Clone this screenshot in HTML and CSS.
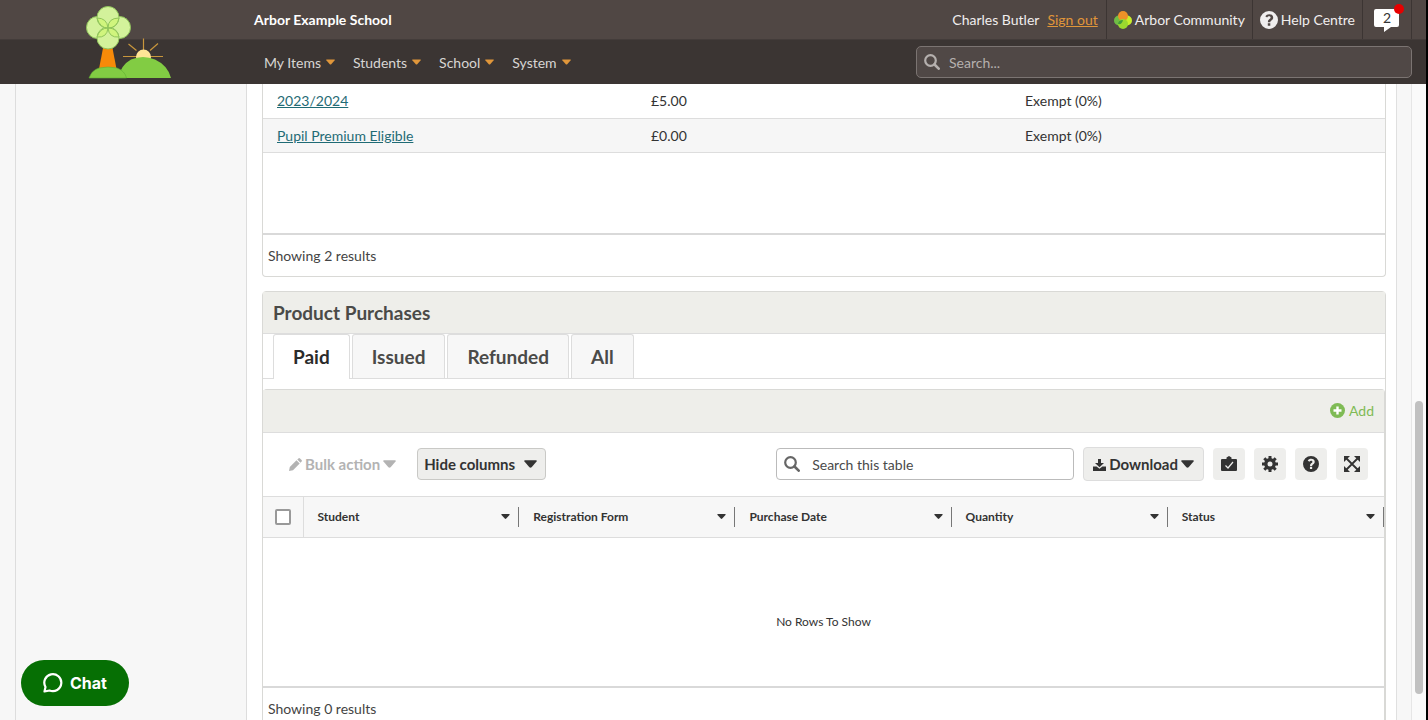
FILE: index.html
```html
<!DOCTYPE html>
<html lang="en">
<head>
    <meta charset="UTF-8">
    <meta name="viewport" content="width=device-width, initial-scale=1.0">
    <title>Arbor - Product Purchases</title>
    <link rel="stylesheet" href="styles.css">
</head>
<body>
    <!-- Shared icons -->
    <svg class="sprite" aria-hidden="true">
        <symbol id="caret" viewBox="0 0 12 7">
            <path d="M1 0h10q1.400 .2 .6 1.300L7 6.400q-1 .9-2 0L.4 1.300Q-.4.200 1 0z"/>
        </symbol>
        <symbol id="search" viewBox="0 0 16 16">
            <circle cx="6.500" cy="6.500" r="5.300" fill="none" stroke="currentColor" stroke-width="2.200"/>
            <path d="M10.500 10.500l4.200 4.200" stroke="currentColor" stroke-width="2.600" stroke-linecap="round"/>
        </symbol>
        <symbol id="help" viewBox="0 0 18 18">
            <path fill-rule="evenodd" d="M9 0a9 9 0 1 0 0 18A9 9 0 0 0 9 0zM7.800 12.200h2.500v2.500H7.800zM7.900 11.200c0-3.200 2.700-2.900 2.700-4.600 0-.9-.7-1.300-1.500-1.300-.9 0-1.500.5-2 1.200L5.300 5.200C6.200 3.900 7.500 3.200 9.200 3.200c2.300 0 4 1.300 4 3.300 0 2.900-2.900 2.900-2.900 4.700z"/>
        </symbol>
    </svg>

    <header class="header">
        <a class="logo" href="#" aria-label="Home">
            <svg viewBox="84 4 90 76" width="90" height="76">
                <g stroke="#c8963c" stroke-width="1.200">
                    <path d="M143.500 38.500v12M123 56.500h40M128.500 44l8 6.500M158 43.500l-8 7"/>
                </g>
                <circle cx="143.500" cy="57" r="7.500" fill="#ffe596"/>
                <path d="M103 48h9.500l4 21h-17.500z" fill="#f78a09"/>
                <path d="M118 78q3-13 13-18.500 12-5 24 0 13 6 16 18.500z" fill="#82cc43"/>
                <path d="M89 78q3-8 10-10 9-2 18 0 8 3 9.500 10z" fill="#82cc43" stroke="#5faf33" stroke-width=".6"/>
                <g fill="#d3f29b" stroke="#8fc45a" stroke-width="1">
                    <circle cx="97.500" cy="27.500" r="11"/>
                    <circle cx="119.500" cy="27.500" r="11"/>
                    <circle cx="108" cy="17.500" r="11"/>
                    <circle cx="108" cy="38" r="11"/>
                </g>
                <path d="M108 28q-8 0-11-10 10 0 11 10zM108 28q0-10 11-10-2 10-11 10zM108 28q-1 10-11 9 3-9 11-9zM108 28q9 0 11 9-10 1-11-9z" fill="#d0f57d" stroke="#8fc45a" stroke-width="1"/>
            </svg>
        </a>
        <div class="top-bar">
            <strong class="school">Arbor Example School</strong>
            <div class="account">
                <span>Charles Butler</span>
                <a href="#">Sign out</a>
            </div>
            <a class="top-link" href="#">
                <svg width="18" height="18" viewBox="0 0 18 18">
                    <circle cx="5" cy="9.500" r="5" fill="#6fbd45"/>
                    <circle cx="13" cy="9.500" r="5" fill="#c8ee2b"/>
                    <circle cx="9" cy="5" r="5" fill="#ee9128"/>
                    <circle cx="9" cy="13" r="5" fill="#9bd92f"/>
                    <path d="M9 9q-1 5-5 4 0-4 5-4z" fill="#429c3c"/>
                </svg>
                Arbor Community
            </a>
            <a class="top-link" href="#">
                <svg width="18" height="18"><use href="#help"/></svg>
                Help Centre
            </a>
            <a class="messages" href="#" aria-label="2 messages">
                <svg width="26" height="24" viewBox="0 0 26 24">
                    <path d="M2 1h21q2 0 2 2v14q0 2-2 2h-6l-7 5v-5H2q-2 0-2-2V3q0-2 2-2z" fill="#fff"/>
                </svg>
                <span class="count">2</span>
                <span class="dot"></span>
            </a>
        </div>
        <div class="nav-bar">
            <nav class="nav">
                <a href="#">My Items <svg width="9" height="6"><use href="#caret"/></svg></a>
                <a href="#">Students <svg width="9" height="6"><use href="#caret"/></svg></a>
                <a href="#">School <svg width="9" height="6"><use href="#caret"/></svg></a>
                <a href="#">System <svg width="9" height="6"><use href="#caret"/></svg></a>
            </nav>
            <label class="site-search">
                <svg width="16" height="16"><use href="#search"/></svg>
                <input type="text" placeholder="Search..." aria-label="Search">
            </label>
        </div>
    </header>

    <div class="page">
        <aside class="sidebar"></aside>

        <main class="content">
            <section class="panel">
                <table class="prices">
                    <tbody>
                        <tr>
                            <td><a href="#">2023/2024</a></td>
                            <td>£5.00</td>
                            <td>Exempt (0%)</td>
                        </tr>
                        <tr>
                            <td><a href="#">Pupil Premium Eligible</a></td>
                            <td>£0.00</td>
                            <td>Exempt (0%)</td>
                        </tr>
                    </tbody>
                </table>
                <div class="prices-space"></div>
                <p class="results">Showing 2 results</p>
            </section>

            <section class="panel purchases">
                <h2>Product Purchases</h2>
                <div class="tabs" role="tablist">
                    <button class="tab active" role="tab" aria-selected="true">Paid</button>
                    <button class="tab" role="tab">Issued</button>
                    <button class="tab" role="tab">Refunded</button>
                    <button class="tab" role="tab">All</button>
                </div>

                <div class="grid-panel">
                    <div class="grid-head">
                        <a class="add" href="#">
                            <svg width="15" height="15" viewBox="0 0 15 15">
                                <circle cx="7.500" cy="7.500" r="7.500" fill="currentColor"/>
                                <path d="M7.500 3.500v8M3.500 7.500h8" stroke="#fff" stroke-width="2.400"/>
                            </svg>
                            Add
                        </a>
                    </div>

                    <div class="toolbar">
                        <button class="btn bulk" disabled>
                            <svg width="13" height="13" viewBox="0 0 13 13" fill="currentColor">
                                <path d="M0 13l.8-4L7.500 2.300l3.200 3.200L4 12.200zM8.300 1.500L9.400.400q.8-.7 1.600 0L12.600 2q.7.800 0 1.600l-1.100 1.100z"/>
                            </svg>
                            Bulk action
                            <svg width="13" height="8"><use href="#caret"/></svg>
                        </button>
                        <button class="btn columns">
                            Hide columns
                            <svg width="13" height="8"><use href="#caret"/></svg>
                        </button>
                        <label class="table-search">
                            <svg width="16" height="16"><use href="#search"/></svg>
                            <input type="text" placeholder="Search this table" aria-label="Search this table">
                        </label>
                        <button class="btn download">
                            <svg width="13" height="13" viewBox="0 0 13 13" fill="currentColor">
                                <path d="M5 1h3v4h3L6.500 9.300 2 5h3z"/>
                                <path d="M0 8.500h3.600l2.900 2.300 2.900-2.300H13V13H0z"/>
                            </svg>
                            Download
                            <svg width="13" height="8"><use href="#caret"/></svg>
                        </button>
                        <button class="icon-btn" aria-label="Tasks">
                            <svg width="18" height="18" viewBox="0 0 18 18">
                                <path d="M2 4h4.500V2.500L9 1l2.500 1.500V4H16q1 0 1 1v10q0 1-1 1H2q-1 0-1-1V5q0-1 1-1z"/>
                                <path d="M5.500 10.500l2.500 2.500 5-6" fill="none" stroke="#eeeeec" stroke-width="1.200"/>
                            </svg>
                        </button>
                        <button class="icon-btn" aria-label="Settings">
                            <svg width="16" height="16" viewBox="0 0 16 16">
                                <circle cx="8" cy="8" r="4.200" fill="none" stroke="currentColor" stroke-width="3.400"/>
                                <path d="M8 0v3M8 13v3M0 8h3M13 8h3M2.300 2.300l2.200 2.200M11.500 11.500l2.200 2.200M2.300 13.700l2.200-2.200M11.500 4.500l2.200-2.200" stroke="currentColor" stroke-width="3"/>
                            </svg>
                        </button>
                        <button class="icon-btn" aria-label="Help">
                            <svg width="16" height="16"><use href="#help"/></svg>
                        </button>
                        <button class="icon-btn" aria-label="Full screen">
                            <svg width="16" height="16" viewBox="0 0 16 16">
                                <path d="M2 2l12 12M14 2L2 14" stroke="currentColor" stroke-width="1.800"/>
                                <path d="M0 0h6L4 2l-2 2-2 2zM16 0v6l-2-2-2-2-2-2zM0 16v-6l2 2 2 2 2 2zM16 16h-6l2-2 2-2 2-2z"/>
                            </svg>
                        </button>
                    </div>

                    <table class="grid">
                        <thead>
                            <tr>
                                <th class="check"><input type="checkbox" aria-label="Select all"></th>
                                <th><div>Student <svg width="9" height="5"><use href="#caret"/></svg></div></th>
                                <th><div>Registration Form <svg width="9" height="5"><use href="#caret"/></svg></div></th>
                                <th><div>Purchase Date <svg width="9" height="5"><use href="#caret"/></svg></div></th>
                                <th><div>Quantity <svg width="9" height="5"><use href="#caret"/></svg></div></th>
                                <th><div>Status <svg width="9" height="5"><use href="#caret"/></svg></div></th>
                            </tr>
                        </thead>
                        <tbody>
                            <tr>
                                <td class="empty" colspan="6">No Rows To Show</td>
                            </tr>
                        </tbody>
                    </table>
                    <p class="results">Showing 0 results</p>
                </div>
            </section>
        </main>

        <div class="gutter"></div>
    </div>

    <div class="scrollbar"><div class="thumb"></div></div>

    <button class="chat">
        <svg width="20" height="20" viewBox="0 0 20 20">
            <path d="M1.500 18.500l1-4.500A8.500 8.500 0 1 1 6.500 17.500z" fill="none" stroke="#fff" stroke-width="2.200" stroke-linejoin="round"/>
        </svg>
        Chat
    </button>
</body>
</html>
```

FILE: styles.css
```css
* {
    margin: 0;
    padding: 0;
    box-sizing: border-box;
}

body {
    height: 100vh;
    overflow: hidden;
    display: flex;
    flex-direction: column;
    font-family: Lato, "Open Sans", sans-serif;
    font-size: 14px;
    color: #333;
    background: #f7f7f7;
    border-right: 2px solid #000;
}

button,
input {
    font: inherit;
    color: inherit;
}

button {
    cursor: pointer;
}

svg {
    flex-shrink: 0;
    fill: currentColor;
}

.sprite {
    position: absolute;
    width: 0;
    height: 0;
}

/* Header */
.header {
    position: relative;
    z-index: 1;
    flex-shrink: 0;
    color: #f0eeee;
}

.header a {
    color: inherit;
    text-decoration: none;
}

.logo {
    position: absolute;
    left: 84px;
    top: 4px;
}

.top-bar {
    height: 40px;
    padding: 0 14px 0 254px;
    display: flex;
    align-items: center;
    background: #504744;
    border-bottom: 1px solid #433c3a;
}

.school {
    margin-right: auto;
    color: #fff;
}

.account {
    display: flex;
    gap: 8px;
    padding-right: 8px;
}

.header .account a {
    color: #e0963a;
    text-decoration: underline;
}

.top-link,
.messages {
    height: 100%;
    display: flex;
    align-items: center;
    gap: 3px;
    padding: 0 7px;
    border-left: 1px solid #3c3533;
}

.messages {
    position: relative;
    padding: 0 11px;
    border-right: 1px solid #3c3533;
}

.count {
    position: absolute;
    left: 11px;
    top: 9px;
    width: 26px;
    text-align: center;
    font-size: 14px;
    color: #333;
}

.dot {
    position: absolute;
    right: 7px;
    top: 4px;
    width: 10px;
    height: 10px;
    border-radius: 50%;
    background: #e60000;
}

.nav-bar {
    height: 44px;
    padding: 0 14px 0 264px;
    display: flex;
    align-items: center;
    justify-content: space-between;
    background: #3b3533;
}

.nav {
    display: flex;
    gap: 18px;
    color: #d8d5d3;
}

.nav a {
    display: flex;
    align-items: center;
    gap: 5px;
}

.nav svg {
    color: #e0963a;
}

.site-search {
    width: 45%;
    max-width: 496px;
    height: 32px;
    padding: 0 7px;
    display: flex;
    align-items: center;
    gap: 9px;
    background: #504846;
    border: 1px solid #7b7472;
    border-radius: 5px;
    color: #b5b0ae;
}

.site-search input,
.table-search input {
    flex: 1;
    min-width: 0;
    border: none;
    outline: none;
    background: none;
}

.site-search input::placeholder {
    color: #b5b0ae;
}

/* Page columns */
.page {
    flex: 1;
    min-height: 0;
    display: flex;
    padding-left: 15px;
    padding-right: 14px;
    overflow: hidden;
}

.sidebar {
    width: 232px;
    flex-shrink: 0;
    border-left: 1px solid #ddd;
    border-right: 1px solid #ddd;
}

.content {
    flex: 1;
    min-width: 0;
    height: max-content;
    min-height: 100%;
    padding: 0 10px 15px 15px;
    background: #fff;
}

.gutter {
    width: 16px;
    flex-shrink: 0;
    border-left: 1px solid #e0e0e0;
    border-right: 1px solid #e6e6e6;
}

.panel {
    border: 1px solid #d9d9d6;
    border-radius: 4px;
}

.panel:first-child {
    border-top: none;
    border-radius: 0 0 4px 4px;
}

table {
    width: 100%;
    table-layout: fixed;
    border-collapse: collapse;
}

/* Prices */
.prices td {
    height: 34px;
    padding: 0 14px;
    border-bottom: 1px solid #ddd;
}

.prices tr:nth-child(even) {
    background: #f6f6f6;
}

.prices a {
    color: #1f6b75;
}

.prices-space {
    height: 80px;
}

.results {
    padding: 0 5px;
    line-height: 41px;
    border-top: 2px solid #d9d9d9;
    color: #444;
}

/* Purchases */
.purchases {
    margin-top: 14px;
}

h2 {
    padding: 0 10px;
    font-size: 19px;
    line-height: 41px;
    color: #4a4a48;
    background: #eeeeea;
    border-bottom: 1px solid #ddd;
}

.tabs {
    display: flex;
    gap: 2px;
    padding-left: 10px;
    border-bottom: 1px solid #ddd;
}

.tab {
    height: 44px;
    padding: 0 19px;
    font-size: 19px;
    font-weight: bold;
    color: #4a4a48;
    background: #f7f7f7;
    border: 1px solid #ddd;
    border-bottom: none;
    border-radius: 3px 3px 0 0;
}

.tab.active {
    margin-bottom: -1px;
    height: 45px;
    color: #2b2b2b;
    background: #fff;
}

.grid-panel {
    margin-top: 10px;
    border: 1px solid #d9d9d6;
    border-left: none;
    border-radius: 4px 4px 0 0;
}

.grid-head {
    height: 43px;
    padding: 0 10px;
    display: flex;
    align-items: center;
    justify-content: flex-end;
    background: #eeeeea;
    border-bottom: 1px solid #ddd;
}

.add {
    display: flex;
    align-items: center;
    gap: 4px;
    color: #7fbb55;
    text-decoration: none;
}

.toolbar {
    height: 63px;
    padding: 0 16px 0 26px;
    display: flex;
    align-items: center;
    gap: 9px;
}

.btn {
    height: 32px;
    display: flex;
    align-items: center;
    gap: 3px;
    font-size: 15px;
    font-weight: bold;
    color: #333;
    background: #eeeeec;
    border: 1px solid #c9c9c6;
    border-radius: 4px;
    white-space: nowrap;
}

.bulk {
    margin-right: 12px;
    background: none;
    border: none;
    color: #b3b3b3;
}

.columns {
    padding: 0 8px 0 6px;
    gap: 9px;
    margin-right: auto;
}

.download {
    height: 34px;
    padding: 0 9px;
    border-color: #ddd;
}

.table-search {
    width: 298px;
    height: 32px;
    padding: 0 7px;
    display: flex;
    align-items: center;
    gap: 12px;
    background: #fff;
    border: 1px solid #bbb;
    border-radius: 4px;
    color: #666;
}

.table-search input::placeholder {
    color: #4a4a4a;
}

.icon-btn {
    width: 32px;
    height: 32px;
    display: flex;
    align-items: center;
    justify-content: center;
    color: #333;
    background: #eeeeec;
    border: none;
    border-radius: 4px;
}

.grid thead {
    background: #f7f7f7;
    border-top: 1px solid #ddd;
    border-bottom: 1px solid #ddd;
}

.grid th {
    height: 41px;
    font-size: 12px;
    text-align: left;
}

.grid th div {
    height: 20px;
    padding: 0 8px 0 14px;
    display: flex;
    align-items: center;
    justify-content: space-between;
    border-right: 1px solid #777;
}

.grid .check {
    width: 40px;
    border-right: 1px solid #ddd;
    text-align: center;
}

.check input {
    appearance: none;
    display: block;
    width: 16px;
    height: 16px;
    margin: 0 auto;
    background: #fff;
    border: 2px solid #999;
    border-radius: 2px;
}

.empty {
    height: 149px;
    padding-top: 20px;
    text-align: center;
    font-size: 12px;
}

/* Floating parts */
.scrollbar {
    position: fixed;
    top: 84px;
    right: 2px;
    bottom: 0;
    width: 14px;
    background: #fafafa;
}

.thumb {
    height: 46%;
    width: 8px;
    margin: 317px auto 0;
    border-radius: 4px;
    background: #c1c1c1;
}

.chat {
    position: fixed;
    left: 21px;
    bottom: 14px;
    height: 46px;
    padding: 0 22px;
    display: flex;
    align-items: center;
    gap: 7px;
    font-family: Inter, sans-serif;
    font-size: 16px;
    font-weight: bold;
    color: #fff;
    background: #066f04;
    border: none;
    border-radius: 23px;
}
```
